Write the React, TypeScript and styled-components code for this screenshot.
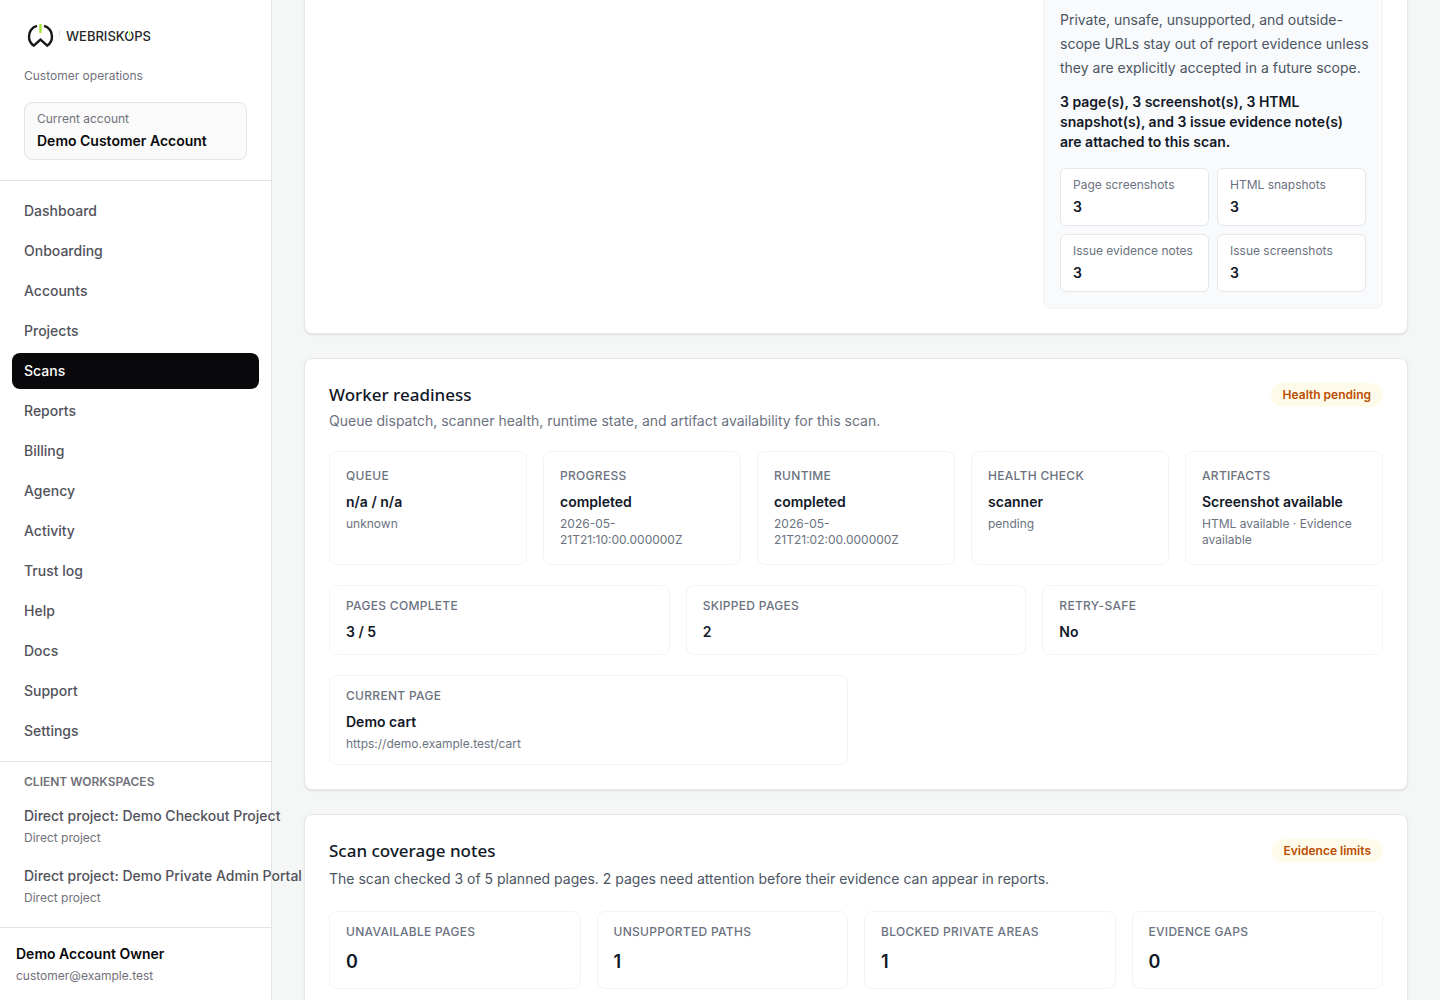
import React from "react";
import styled, { createGlobalStyle } from "styled-components";

const GlobalStyle = createGlobalStyle`
  *, *::before, *::after { box-sizing: border-box; }
  body {
    margin: 0;
    background: #f5f7f6;
    color: #111827;
    font-family: Inter, "Liberation Sans", sans-serif;
    font-size: 14px;
    line-height: 20px;
  }
  h2, p, ul, dl, dt, dd { margin: 0; padding: 0; }
  ul { list-style: none; }
  a { color: inherit; text-decoration: none; }
`;

const Shell = styled.div`
  display: grid;
  grid-template-columns: 272px minmax(0, 1fr);
  height: 100vh;
`;

const Sidebar = styled.aside`
  position: relative;
  z-index: 1;
  display: flex;
  flex-direction: column;
  min-height: 0;
  background: #ffffff;
  border-right: 1px solid #e4e4e7;
`;

const SidebarHeader = styled.header`
  padding: 20px 24px;
  border-bottom: 1px solid #e4e4e7;
`;

const LogoLink = styled.a`
  display: block;
  height: 32px;

  svg { display: block; }
`;

const Tagline = styled.p`
  margin-top: 16px;
  color: #71717a;
  font-size: 12px;
  line-height: 16px;
`;

const AccountBox = styled.div`
  margin-top: 18px;
  padding: 8px 12px;
  border: 1px solid #e4e4e7;
  border-radius: 8px;
  background: #fafafa;
`;

const MutedText = styled.p`
  color: #71717a;
  font-size: 12px;
  line-height: 16px;
`;

const StrongText = styled.p`
  color: #09090b;
  font-weight: 600;
`;

const AccountName = styled(StrongText)`
  margin-top: 4px;
`;

const SidebarBody = styled.div`
  flex: 1;
`;

const NavList = styled.ul`
  display: grid;
  gap: 4px;
  padding: 12px;
`;

const NavLink = styled.a<{ $active?: boolean }>`
  display: block;
  padding: 8px 12px;
  border-radius: 8px;
  background: ${(p) => (p.$active ? "#09090b" : "transparent")};
  color: ${(p) => (p.$active ? "#ffffff" : "#52525b")};
  font-weight: 500;
`;

const Workspaces = styled.section`
  padding: 12px;
  border-top: 1px solid #e4e4e7;
`;

const WorkspacesTitle = styled.h2`
  padding: 0 12px;
  color: #71717a;
  font-size: 12px;
  font-weight: 600;
  line-height: 16px;
  text-transform: uppercase;
`;

const WorkspaceList = styled.ul`
  display: grid;
  gap: 4px;
  margin-top: 8px;
`;

const WorkspaceLink = styled.a`
  display: grid;
  gap: 4px;
  padding: 8px 12px;
  color: #52525b;
  font-weight: 500;
  white-space: nowrap;
`;

const WorkspaceKind = styled.span`
  color: #71717a;
  font-size: 12px;
  font-weight: 400;
  line-height: 16px;
`;

const SidebarFooter = styled.footer`
  display: grid;
  gap: 4px;
  padding: 16px;
  border-top: 1px solid #e4e4e7;
`;

const Main = styled.main`
  display: flex;
  flex-direction: column;
  gap: 24px;
  padding: 0 32px 24px;
  overflow-y: auto;
  scrollbar-width: none;
`;

const Card = styled.section<{ $continued?: boolean }>`
  flex: none;
  padding: ${(p) => (p.$continued ? "0 24px 24px" : "24px")};
  border: 1px solid #e5e7eb;
  border-top-width: ${(p) => (p.$continued ? "0" : "1px")};
  border-radius: ${(p) => (p.$continued ? "0 0 8px 8px" : "8px")};
  background: #ffffff;
  box-shadow: 0 1px 2px rgba(0, 0, 0, 0.1);
`;

const EvidencePanel = styled.aside`
  width: 340px;
  max-width: 100%;
  margin-left: auto;
  padding: 8px 16px 16px;
  border: 1px solid #f3f4f6;
  border-top: 0;
  border-radius: 0 0 8px 8px;
  background: #f9fafb;
`;

const PanelText = styled.p`
  margin-right: -4px;
  color: #4b5563;
  line-height: 24px;
`;

const PanelSummary = styled.p`
  margin-top: 12px;
  font-weight: 600;
`;

const PanelGrid = styled.dl`
  display: grid;
  grid-template-columns: repeat(2, minmax(0, 1fr));
  gap: 8px;
  margin-top: 16px;
`;

const CountTile = styled.div`
  display: grid;
  gap: 4px;
  padding: 8px 12px;
  border: 1px solid #e5e7eb;
  border-radius: 6px;
  background: #ffffff;

  dt { color: #6b7280; font-size: 12px; line-height: 16px; }
  dd { font-weight: 600; }
`;

const CardHeader = styled.header`
  display: flex;
  align-items: flex-start;
  justify-content: space-between;
  gap: 16px;
`;

const CardTitle = styled.h2`
  font-family: "Noto Sans", "Open Sans", sans-serif;
  font-size: 17px;
  font-weight: 500;
  line-height: 24px;
`;

const CardLead = styled.p<{ $dark?: boolean }>`
  margin-top: 4px;
  color: ${(p) => (p.$dark ? "#4b5563" : "#6b7280")};
  line-height: ${(p) => (p.$dark ? "24px" : "20px")};
`;

const Badge = styled.span`
  flex: none;
  padding: 4px 12px;
  border-radius: 12px;
  background: #fffbeb;
  color: #bb4d00;
  font-size: 12px;
  font-weight: 600;
  line-height: 16px;
`;

const StatGrid = styled.dl<{ $columns: number }>`
  display: grid;
  grid-template-columns: repeat(${(p) => p.$columns}, minmax(0, 1fr));
  gap: 16px;
  margin-top: 20px;
`;

const Stat = styled.div<{ $roomy?: boolean }>`
  padding: ${(p) => (p.$roomy ? "16px" : "12px 16px")};
  border: 1px solid #f3f4f6;
  border-radius: 8px;
`;

const StatLabel = styled.dt`
  color: #6b7280;
  font-size: 12px;
  font-weight: 500;
  line-height: 16px;
  letter-spacing: 0.025em;
  text-transform: uppercase;
`;

const StatValue = styled.dd<{ $large?: boolean }>`
  margin-top: 8px;
  font-size: ${(p) => (p.$large ? "18px" : "14px")};
  font-weight: 600;
  line-height: ${(p) => (p.$large ? "28px" : "20px")};
`;

const StatNote = styled.dd`
  margin-top: 4px;
  color: #6b7280;
  font-size: 12px;
  line-height: 16px;
`;

type StatItem = { label: string; value: string; note?: string };

const navItems = [
  "Dashboard", "Onboarding", "Accounts", "Projects", "Scans", "Reports", "Billing",
  "Agency", "Activity", "Trust log", "Help", "Docs", "Support", "Settings",
];

const workspaces = [
  "Direct project: Demo Checkout Project",
  "Direct project: Demo Private Admin Portal",
];

const evidenceCounts = [
  ["Page screenshots", "3"],
  ["HTML snapshots", "3"],
  ["Issue evidence notes", "3"],
  ["Issue screenshots", "3"],
];

const readiness: StatItem[] = [
  { label: "Queue", value: "n/a / n/a", note: "unknown" },
  { label: "Progress", value: "completed", note: "2026-05-21T21:10:00.000000Z" },
  { label: "Runtime", value: "completed", note: "2026-05-21T21:02:00.000000Z" },
  { label: "Health check", value: "scanner", note: "pending" },
  { label: "Artifacts", value: "Screenshot available", note: "HTML available · Evidence available" },
];

const pageTotals: StatItem[] = [
  { label: "Pages complete", value: "3 / 5" },
  { label: "Skipped pages", value: "2" },
  { label: "Retry-safe", value: "No" },
];

const currentPage: StatItem[] = [
  { label: "Current page", value: "Demo cart", note: "https://demo.example.test/cart" },
];

const coverage: StatItem[] = [
  { label: "Unavailable pages", value: "0" },
  { label: "Unsupported paths", value: "1" },
  { label: "Blocked private areas", value: "1" },
  { label: "Evidence gaps", value: "0" },
];

function Logo() {
  return (
    <svg width="132" height="32" viewBox="0 0 132 32" role="img" aria-label="WebRiskOps">
      <path
        d="M13 5.800C8 7 5 11.600 5 16.400c0 3.900 1.600 7 4.700 9.200L16.500 19.500l6.800 6.100c3.100-2.200 4.700-5.300 4.700-9.200C28 11.600 25 7 20 5.800"
        fill="none" stroke="#18181b" strokeWidth="2.400"
      />
      <path d="M16.500 4v9" stroke="#a3e635" strokeWidth="2.400" />
      <path d="M35.500 10v7" stroke="#e4e4e7" strokeWidth="1" />
      <text x="42" y="21" fill="#27272a" fontFamily="Inter, sans-serif" fontSize="13" fontWeight="500">
        WEBRISKOPS
      </text>
      <path d="M105.500 10v5" stroke="#ffffff" strokeWidth="3" />
      <path d="M105.500 11v5" stroke="#a3e635" strokeWidth="1.200" />
    </svg>
  );
}

function Stats({ items, columns, roomy, large }: {
  items: StatItem[]; columns: number; roomy?: boolean; large?: boolean;
}) {
  return (
    <StatGrid $columns={columns}>
      {items.map((item) => (
        <Stat key={item.label} $roomy={roomy}>
          <StatLabel>{item.label}</StatLabel>
          <StatValue $large={large}>{item.value}</StatValue>
          {item.note && <StatNote>{item.note}</StatNote>}
        </Stat>
      ))}
    </StatGrid>
  );
}

export default function App() {
  return (
    <>
      <GlobalStyle />
      <Shell>
        <Sidebar>
          <SidebarHeader>
            <LogoLink href="#home"><Logo /></LogoLink>
            <Tagline>Customer operations</Tagline>
            <AccountBox>
              <MutedText>Current account</MutedText>
              <AccountName>Demo Customer Account</AccountName>
            </AccountBox>
          </SidebarHeader>
          <SidebarBody>
            <nav aria-label="Main">
              <NavList>
                {navItems.map((item) => (
                  <li key={item}>
                    <NavLink
                      href="#"
                      $active={item === "Scans"}
                      aria-current={item === "Scans" ? "page" : undefined}
                    >
                      {item}
                    </NavLink>
                  </li>
                ))}
              </NavList>
            </nav>
            <Workspaces>
              <WorkspacesTitle>Client workspaces</WorkspacesTitle>
              <WorkspaceList>
                {workspaces.map((name) => (
                  <li key={name}>
                    <WorkspaceLink href="#">
                      {name}
                      <WorkspaceKind>Direct project</WorkspaceKind>
                    </WorkspaceLink>
                  </li>
                ))}
              </WorkspaceList>
            </Workspaces>
          </SidebarBody>
          <SidebarFooter>
            <StrongText>Demo Account Owner</StrongText>
            <MutedText>customer@example.test</MutedText>
          </SidebarFooter>
        </Sidebar>

        <Main>
          <Card $continued>
            <EvidencePanel>
              <PanelText>
                Private, unsafe, unsupported, and outside-scope URLs stay out of report
                evidence unless they are explicitly accepted in a future scope.
              </PanelText>
              <PanelSummary>
                3 page(s), 3 screenshot(s), 3 HTML snapshot(s), and 3 issue evidence
                note(s) are attached to this scan.
              </PanelSummary>
              <PanelGrid>
                {evidenceCounts.map(([label, value]) => (
                  <CountTile key={label}>
                    <dt>{label}</dt>
                    <dd>{value}</dd>
                  </CountTile>
                ))}
              </PanelGrid>
            </EvidencePanel>
          </Card>

          <Card>
            <CardHeader>
              <div>
                <CardTitle>Worker readiness</CardTitle>
                <CardLead>
                  Queue dispatch, scanner health, runtime state, and artifact availability for this scan.
                </CardLead>
              </div>
              <Badge>Health pending</Badge>
            </CardHeader>
            <Stats items={readiness} columns={5} roomy />
            <Stats items={pageTotals} columns={3} />
            <Stats items={currentPage} columns={2} />
          </Card>

          <Card>
            <CardHeader>
              <div>
                <CardTitle>Scan coverage notes</CardTitle>
                <CardLead $dark>
                  The scan checked 3 of 5 planned pages. 2 pages need attention before their
                  evidence can appear in reports.
                </CardLead>
              </div>
              <Badge>Evidence limits</Badge>
            </CardHeader>
            <Stats items={coverage} columns={4} large />
          </Card>
        </Main>
      </Shell>
    </>
  );
}
